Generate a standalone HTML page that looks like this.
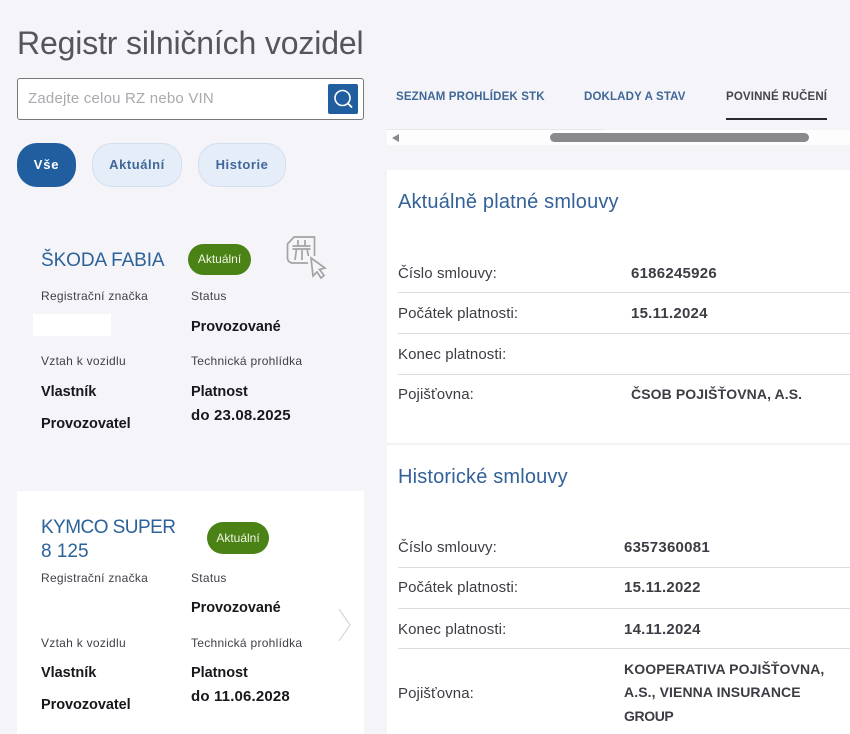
<!DOCTYPE html>
<html lang="cs">
<head>
<meta charset="utf-8">
<title>Registr silničních vozidel</title>
<style>
html,body{margin:0;padding:0}
body{position:relative;width:850px;height:734px;overflow:hidden;background:#f5f4f8;font-family:"Liberation Sans",sans-serif;color:#3c3c44}
.a{position:absolute;white-space:nowrap}
.box{position:absolute}
.lab{font-size:12px;line-height:16px;color:#3f3f46;letter-spacing:.28px}
.val{font-size:14.5px;line-height:18px;font-weight:bold;color:#17171c;letter-spacing:-.05px}
.val.dt{font-size:15px;letter-spacing:.17px}
.tab{font-size:11.5px;line-height:16px;font-weight:bold;color:#3f6798;letter-spacing:.15px}
.k{font-size:15px;line-height:18px;color:#3c3c44;letter-spacing:.1px}
.v{font-size:14px;line-height:18px;font-weight:bold;color:#3c3c44;letter-spacing:.1px}
.v.n{font-size:15px;letter-spacing:.25px}
.h{font-size:20px;line-height:24px;color:#336199;letter-spacing:.17px}
.hr{position:absolute;left:398px;width:452px;height:1px;background:#dcdcdf}
.name{font-size:19px;line-height:24px;color:#2a6299}
.badge{position:absolute;background:#4b8216;color:#f0f6e6;border-radius:16px;font-size:12px;text-align:center}
</style>
</head>
<body>
<div class="a" style="left:17px;top:23px;font-size:32px;line-height:40px;color:#55555c;letter-spacing:-.15px">Registr silničních vozidel</div>

<div class="box" style="left:17px;top:78px;width:345px;height:40px;background:#fff;border:1px solid #77777c;border-radius:3px"></div>
<div class="a" style="left:28px;top:90px;font-size:15px;line-height:18px;color:#a9a9ae;letter-spacing:.2px">Zadejte celou RZ nebo VIN</div>
<div class="box" style="left:328px;top:84px;width:30px;height:30px;background:#215e9f;border-radius:2px"></div>
<svg class="box" style="left:328px;top:84px" width="30" height="30" viewBox="0 0 30 30"><circle cx="14.5" cy="14" r="7.5" fill="none" stroke="#fff" stroke-width="1.6"/><path d="M20 19.5L24 23.5" stroke="#fff" stroke-width="1.8" fill="none"/></svg>

<div class="box" style="left:17px;top:143px;width:59px;height:44px;background:#215e9f;border-radius:20px"></div>
<div class="a" style="left:17px;top:157px;width:59px;text-align:center;font-size:13px;line-height:16px;font-weight:bold;color:#fff;letter-spacing:.8px">Vše</div>
<div class="box" style="left:92px;top:143px;width:88px;height:42px;background:#e5edf9;border:1px solid #d3dfef;border-radius:20px"></div>
<div class="a" style="left:92px;top:157px;width:90px;text-align:center;font-size:13px;line-height:16px;font-weight:bold;color:#3f6798;letter-spacing:.55px">Aktuální</div>
<div class="box" style="left:198px;top:143px;width:86px;height:42px;background:#e5edf9;border:1px solid #d3dfef;border-radius:20px"></div>
<div class="a" style="left:198px;top:157px;width:88px;text-align:center;font-size:13px;line-height:16px;font-weight:bold;color:#3f6798;letter-spacing:.55px">Historie</div>

<!-- Card 1 -->
<div class="a name" style="left:41px;top:249px;letter-spacing:-.1px">ŠKODA FABIA</div>
<div class="badge" style="left:188px;top:244px;width:63px;height:31px;line-height:31px">Aktuální</div>
<svg class="box" style="left:284px;top:234px" width="46" height="46" viewBox="0 0 46 46" fill="none" stroke="#a3a3a6" stroke-width="1.7"><path d="M30.500 22V3H10L3.500 10V24A5 5 0 0 0 8.500 29H24"/><path d="M8.500 12H26.500M8.500 15H26.500M14 6V12M21 6V12M12.500 15L11 26M23 15L24.500 22M18 16V26"/><path d="M27 24L41 34L35.500 35.500L40 41.500L37 44L33 38L29 42Z" fill="#f5f4f8"/></svg>
<div class="a lab" style="left:41px;top:288px">Registrační značka</div>
<div class="a lab" style="left:191px;top:288px">Status</div>
<div class="box" style="left:33px;top:314px;width:78px;height:22px;background:#fff"></div>
<div class="a val" style="left:191px;top:318px">Provozované</div>
<div class="a lab" style="left:41px;top:353px">Vztah k vozidlu</div>
<div class="a lab" style="left:191px;top:353px">Technická prohlídka</div>
<div class="a val" style="left:41px;top:383px">Vlastník</div>
<div class="a val" style="left:191px;top:383px">Platnost</div>
<div class="a val dt" style="left:191px;top:407px">do 23.08.2025</div>
<div class="a val" style="left:41px;top:415px">Provozovatel</div>

<!-- Card 2 -->
<div class="box" style="left:17px;top:491px;width:347px;height:243px;background:#fff"></div>
<div class="a name" style="left:41px;top:516px;letter-spacing:-.55px">KYMCO SUPER</div>
<div class="a name" style="left:41px;top:540px">8 125</div>
<div class="badge" style="left:207px;top:522px;width:62px;height:32px;line-height:32px">Aktuální</div>
<div class="a lab" style="left:41px;top:570px">Registrační značka</div>
<div class="a lab" style="left:191px;top:570px">Status</div>
<div class="a val" style="left:191px;top:599px">Provozované</div>
<svg class="box" style="left:336px;top:607px" width="16" height="36" viewBox="0 0 16 36" fill="none" stroke="#d7d7da" stroke-width="1.2"><path d="M3 2l11 16L3 34"/></svg>
<div class="a lab" style="left:41px;top:635px">Vztah k vozidlu</div>
<div class="a lab" style="left:191px;top:635px">Technická prohlídka</div>
<div class="a val" style="left:41px;top:664px">Vlastník</div>
<div class="a val" style="left:191px;top:664px">Platnost</div>
<div class="a val dt" style="left:191px;top:688px">do 11.06.2028</div>
<div class="a val" style="left:41px;top:696px">Provozovatel</div>

<!-- Tabs -->
<div class="a tab" style="left:396px;top:89px">SEZNAM PROHLÍDEK STK</div>
<div class="a tab" style="left:584px;top:89px">DOKLADY A STAV</div>
<div class="a tab" style="left:726px;top:89px;color:#45454b">POVINNÉ RUČENÍ</div>
<div class="box" style="left:726px;top:118px;width:101px;height:2px;background:#2a2a30"></div>
<div class="box" style="left:387px;top:130px;width:463px;height:15px;background:#fdfdfe"></div>
<div class="box" style="left:387px;top:129px;width:218px;height:1px;background:#e7e7ea"></div>
<svg class="box" style="left:391px;top:133px" width="10" height="10" viewBox="0 0 10 10"><path d="M1 5L8 1v8z" fill="#88888b"/></svg>
<div class="box" style="left:550px;top:133px;width:259px;height:9px;background:#8a898d;border-radius:5px"></div>

<!-- Right panel -->
<div class="box" style="left:387px;top:170px;width:463px;height:564px;background:#fff"></div>
<div class="a h" style="left:398px;top:190px">Aktuálně platné smlouvy</div>
<div class="a k" style="left:398px;top:265px">Číslo smlouvy:</div>
<div class="a v n" style="left:631px;top:265px">6186245926</div>
<div class="hr" style="top:292px"></div>
<div class="a k" style="left:398px;top:305px">Počátek platnosti:</div>
<div class="a v n" style="left:631px;top:305px">15.11.2024</div>
<div class="hr" style="top:333px"></div>
<div class="a k" style="left:398px;top:346px">Konec platnosti:</div>
<div class="hr" style="top:374px"></div>
<div class="a k" style="left:398px;top:386px">Pojišťovna:</div>
<div class="a v" style="left:631px;top:385px">ČSOB POJIŠŤOVNA, A.S.</div>
<div class="box" style="left:387px;top:443px;width:463px;height:2px;background:#f2f2f5"></div>
<div class="a h" style="left:398px;top:465px">Historické smlouvy</div>
<div class="a k" style="left:398px;top:539px">Číslo smlouvy:</div>
<div class="a v n" style="left:624px;top:539px">6357360081</div>
<div class="hr" style="top:567px"></div>
<div class="a k" style="left:398px;top:579px">Počátek platnosti:</div>
<div class="a v n" style="left:624px;top:579px">15.11.2022</div>
<div class="hr" style="top:608px"></div>
<div class="a k" style="left:398px;top:621px">Konec platnosti:</div>
<div class="a v n" style="left:624px;top:621px">14.11.2024</div>
<div class="hr" style="top:648px"></div>
<div class="a k" style="left:398px;top:685px">Pojišťovna:</div>
<div class="a v" style="left:624px;top:660px">KOOPERATIVA POJIŠŤOVNA,</div>
<div class="a v" style="left:624px;top:683px">A.S., VIENNA INSURANCE</div>
<div class="a v" style="left:624px;top:707px;letter-spacing:-.4px">GROUP</div>
</body>
</html>
